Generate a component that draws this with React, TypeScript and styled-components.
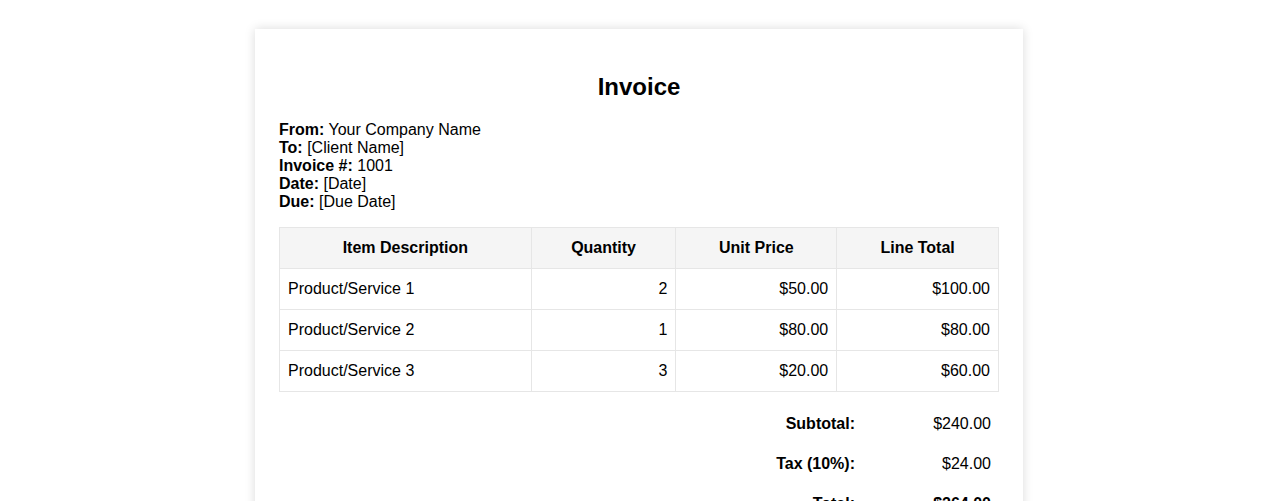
import React from 'react'
import styled, { createGlobalStyle } from 'styled-components'

const Global = createGlobalStyle`
  body {
    margin: 0;
    background: #fff;
    font-family: "Liberation Sans", Arial, sans-serif;
    color: #000;
  }
`

const Page = styled.div`
  display: flex;
  justify-content: center;
  padding-top: 29px;
`

const Card = styled.div`
  width: 768px;
  box-sizing: border-box;
  padding: 24px 24px 40px;
  background: #fff;
  box-shadow: 0 0 10px rgba(0, 0, 0, 0.15);
`

const Title = styled.h1`
  margin: 20px 0 20px;
  font-size: 24px;
  line-height: 28px;
  text-align: center;
  font-weight: 700;
`

const Info = styled.div`
  font-size: 16px;
  line-height: 18px;
  margin-bottom: 16px;
`

const Table = styled.table`
  width: 720px;
  border-collapse: collapse;
  font-size: 16px;
`

const Th = styled.th`
  background: #f5f5f5;
  border: 1px solid #e6e6e6;
  height: 40px;
  padding: 0 8px;
  font-weight: 700;
  text-align: center;
`

const Td = styled.td<{ $right?: boolean }>`
  border: 1px solid #e6e6e6;
  height: 40px;
  padding: 0 8px;
  text-align: ${({ $right }) => ($right ? 'right' : 'left')};
`

const Summary = styled.div`
  display: grid;
  grid-template-columns: 1fr 136px;
  width: 720px;
  margin-top: 12px;
  font-size: 16px;
`

const SumCell = styled.div<{ $bold?: boolean }>`
  height: 40px;
  line-height: 40px;
  padding: 0 8px;
  text-align: right;
  font-weight: ${({ $bold }) => ($bold ? 700 : 400)};
`

const items = [
  { d: 'Product/Service 1', q: 2, p: '$50.00', t: '$100.00' },
  { d: 'Product/Service 2', q: 1, p: '$80.00', t: '$80.00' },
  { d: 'Product/Service 3', q: 3, p: '$20.00', t: '$60.00' },
]

const sums = [
  { l: 'Subtotal:', v: '$240.00', b: false },
  { l: 'Tax (10%):', v: '$24.00', b: false },
  { l: 'Total:', v: '$264.00', b: true },
]

export default function App() {
  return (
    <>
      <Global />
      <Page>
        <Card>
          <Title>Invoice</Title>
          <Info>
            <div><b>From:</b> Your Company Name</div>
            <div><b>To:</b> [Client Name]</div>
            <div><b>Invoice #:</b> 1001</div>
            <div><b>Date:</b> [Date]</div>
            <div><b>Due:</b> [Due Date]</div>
          </Info>
          <Table>
            <colgroup>
              <col style={{ width: 252 }} />
              <col style={{ width: 145 }} />
              <col style={{ width: 161 }} />
              <col style={{ width: 162 }} />
            </colgroup>
            <thead>
              <tr>
                <Th>Item Description</Th>
                <Th>Quantity</Th>
                <Th>Unit Price</Th>
                <Th>Line Total</Th>
              </tr>
            </thead>
            <tbody>
              {items.map((it) => (
                <tr key={it.d}>
                  <Td>{it.d}</Td>
                  <Td $right>{it.q}</Td>
                  <Td $right>{it.p}</Td>
                  <Td $right>{it.t}</Td>
                </tr>
              ))}
            </tbody>
          </Table>
          <Summary>
            {sums.map((s) => (
              <React.Fragment key={s.l}>
                <SumCell $bold>{s.l}</SumCell>
                <SumCell $bold={s.b}>{s.v}</SumCell>
              </React.Fragment>
            ))}
          </Summary>
        </Card>
      </Page>
    </>
  )
}
